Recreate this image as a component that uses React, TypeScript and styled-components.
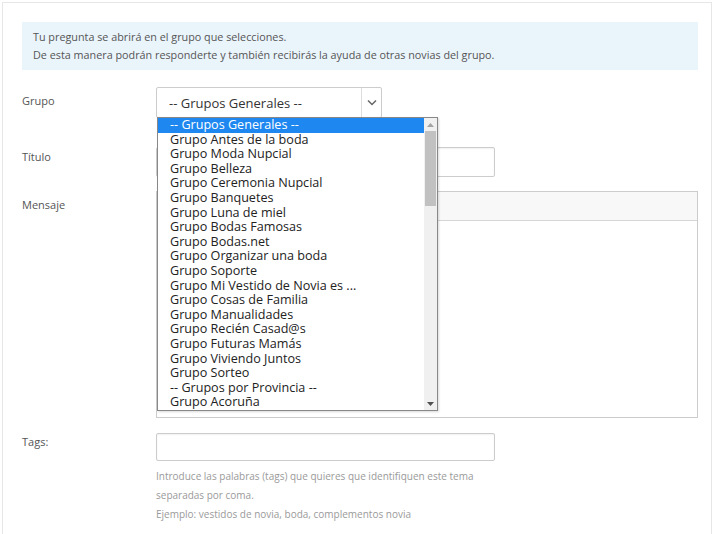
import styled, { createGlobalStyle } from "styled-components";

const GlobalStyle = createGlobalStyle`
  html, body {
    margin: 0;
    background: #fff;
    font-family: "Open Sans", "Liberation Sans", sans-serif;
    overflow: hidden;
  }
`;

const groups = [
  "-- Grupos Generales --",
  "Grupo Antes de la boda",
  "Grupo Moda Nupcial",
  "Grupo Belleza",
  "Grupo Ceremonia Nupcial",
  "Grupo Banquetes",
  "Grupo Luna de miel",
  "Grupo Bodas Famosas",
  "Grupo Bodas.net",
  "Grupo Organizar una boda",
  "Grupo Soporte",
  "Grupo Mi Vestido de Novia es ...",
  "Grupo Cosas de Familia",
  "Grupo Manualidades",
  "Grupo Recién Casad@s",
  "Grupo Futuras Mamás",
  "Grupo Viviendo Juntos",
  "Grupo Sorteo",
  "-- Grupos por Provincia --",
  "Grupo Acoruña",
];

const Panel = styled.div`
  margin: 2px 8px 0 2px;
  border: 1px solid #e6e6e6;
  border-bottom: none;
  padding: 19px 13px 0 19px;
  height: 540px;
  box-sizing: border-box;
`;

const Info = styled.div`
  background: #eaf4fb;
  color: #555;
  font-size: 10.8px;
  line-height: 18px;
  padding: 6px 11px;
  margin-bottom: 17px;
`;

const Row = styled.div<{ $gap: number }>`
  display: grid;
  grid-template-columns: 134px 1fr;
  margin-bottom: ${(p) => p.$gap}px;
  position: relative;
`;

const Label = styled.label<{ $top: number }>`
  font-size: 11px;
  color: #555;
  padding-top: ${(p) => p.$top}px;
  line-height: 16px;
`;

const SelectBox = styled.div`
  width: 226px;
  height: 31px;
  box-sizing: border-box;
  border: 1px solid #ccc;
  border-radius: 2px;
  display: flex;
  align-items: center;
  background: #fff;
`;

const SelectText = styled.span`
  flex: 1;
  padding-left: 12px;
  font-size: 13px;
  color: #333;
`;

const ArrowCell = styled.span`
  width: 19px;
  height: 100%;
  border-left: 1px solid #ddd;
  display: flex;
  align-items: center;
  justify-content: center;
`;

const List = styled.div`
  position: absolute;
  left: 135px;
  top: 30px;
  width: 281px;
  height: 294px;
  box-sizing: border-box;
  border: 1px solid #888;
  background: #fff;
  display: flex;
  z-index: 5;
  box-shadow: 1px 1px 2px rgba(0, 0, 0, 0.15);
`;

const Options = styled.div`
  flex: 1;
  overflow: hidden;
`;

const Option = styled.div<{ $active?: boolean }>`
  height: 14.6px;
  line-height: 14.6px;
  padding-left: 12px;
  font-size: 12.6px;
  white-space: nowrap;
  color: ${(p) => (p.$active ? "#fff" : "#222")};
  background: ${(p) => (p.$active ? "#1e88f0" : "transparent")};
`;

const Scrollbar = styled.div`
  width: 13px;
  background: #f0f0f0;
  display: flex;
  flex-direction: column;
`;

const ScrollArrow = styled.div`
  height: 13px;
  display: flex;
  align-items: center;
  justify-content: center;
`;

const Thumb = styled.div`
  height: 75px;
  margin: 0 1px;
  background: #c1c1c1;
`;

const Spacer = styled.div`
  flex: 1;
`;

const Input = styled.div<{ $h: number }>`
  width: 339px;
  height: ${(p) => p.$h}px;
  box-sizing: border-box;
  border: 1px solid #ccc;
  border-radius: 2px;
  box-shadow: inset 0 1px 2px rgba(0, 0, 0, 0.06);
  background: #fff;
`;

const Editor = styled.div`
  height: 227px;
  box-sizing: border-box;
  border: 1px solid #ccc;
  display: flex;
  flex-direction: column;
`;

const Toolbar = styled.div`
  height: 28px;
  background: #f8f8f8;
  border-bottom: 1px solid #d6d6d6;
`;

const Help = styled.div`
  margin-top: 6px;
  font-size: 10px;
  line-height: 19px;
  color: #9a9a9a;
`;

export default function App() {
  return (
    <>
      <GlobalStyle />
      <Panel>
        <Info>
          Tu pregunta se abrirá en el grupo que selecciones.
          <br />
          De esta manera podrán responderte y también recibirás la ayuda de
          otras novias del grupo.
        </Info>

        <Row $gap={29}>
          <Label $top={6}>Grupo</Label>
          <div>
            <SelectBox>
              <SelectText>-- Grupos Generales --</SelectText>
              <ArrowCell>
                <svg width="10" height="7" viewBox="0 0 10 7">
                  <path d="M1 1.5 L5 5.5 L9 1.5" fill="none" stroke="#666" strokeWidth="1.5" />
                </svg>
              </ArrowCell>
            </SelectBox>
          </div>
          <List>
            <Options>
              {groups.map((g, i) => (
                <Option key={g} $active={i === 0}>
                  {g}
                </Option>
              ))}
            </Options>
            <Scrollbar>
              <ScrollArrow>
                <svg width="7" height="4" viewBox="0 0 7 4">
                  <path d="M0 4 L3.5 0 L7 4 Z" fill="#a3a3a3" />
                </svg>
              </ScrollArrow>
              <Thumb />
              <Spacer />
              <ScrollArrow>
                <svg width="7" height="4" viewBox="0 0 7 4">
                  <path d="M0 0 L3.5 4 L7 0 Z" fill="#505050" />
                </svg>
              </ScrollArrow>
            </Scrollbar>
          </List>
        </Row>

        <Row $gap={14}>
          <Label $top={2}>Título</Label>
          <Input $h={30} />
        </Row>

        <Row $gap={15}>
          <Label $top={6}>Mensaje</Label>
          <Editor>
            <Toolbar />
          </Editor>
        </Row>

        <Row $gap={0}>
          <Label $top={1}>Tags:</Label>
          <div>
            <Input $h={28} />
            <Help>
              Introduce las palabras (tags) que quieres que identifiquen este
              tema
              <br />
              separadas por coma.
              <br />
              Ejemplo: vestidos de novia, boda, complementos novia
            </Help>
          </div>
        </Row>
      </Panel>
    </>
  );
}
